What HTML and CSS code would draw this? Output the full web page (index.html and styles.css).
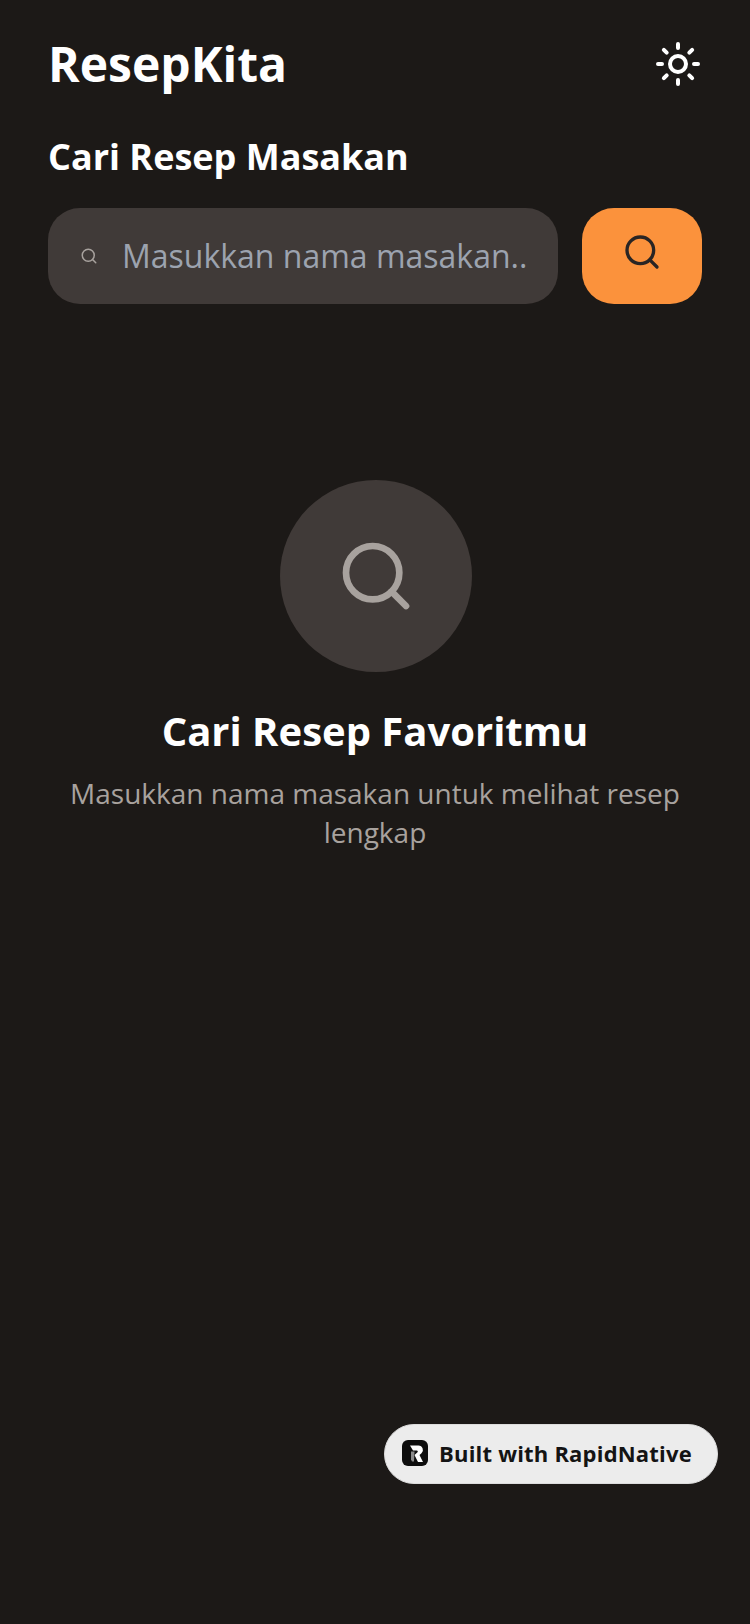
FILE: index.html
```html
<!DOCTYPE html>
<html lang="id">
<head>
<meta charset="utf-8">
<title>ResepKita</title>
<link rel="stylesheet" href="styles.css">
</head>
<body>
<main class="app">
  <header class="topbar">
    <h1 class="brand">ResepKita</h1>
    <svg class="icon-sun" viewBox="0 0 24 24" fill="none" stroke="currentColor" stroke-width="2" stroke-linecap="round" stroke-linejoin="round"><circle cx="12" cy="12" r="4"/><path d="M12 2v2M12 20v2M4.93 4.93l1.41 1.41M17.66 17.66l1.41 1.41M2 12h2M20 12h2M6.34 17.66l-1.41 1.41M19.07 4.93l-1.41 1.41"/></svg>
  </header>
  <section class="search">
    <h2 class="search-title">Cari Resep Masakan</h2>
    <div class="search-row">
      <label class="search-field">
        <svg class="icon-field" viewBox="0 0 24 24" fill="none" stroke="currentColor" stroke-width="2" stroke-linecap="round" stroke-linejoin="round"><circle cx="11" cy="11" r="8"/><path d="m21 21-4.3-4.3"/></svg>
        <input class="search-input" type="text" placeholder="Masukkan nama masakan...">
      </label>
      <button class="search-btn" type="button" aria-label="Cari">
        <svg class="icon-btn" viewBox="0 0 24 24" fill="none" stroke="currentColor" stroke-width="2" stroke-linecap="round" stroke-linejoin="round"><circle cx="11" cy="11" r="8"/><path d="m21 21-4.3-4.3"/></svg>
      </button>
    </div>
  </section>
  <section class="empty">
    <div class="empty-circle">
      <svg class="icon-empty" viewBox="0 0 24 24" fill="none" stroke="currentColor" stroke-width="2" stroke-linecap="round" stroke-linejoin="round"><circle cx="11" cy="11" r="8"/><path d="m21 21-4.3-4.3"/></svg>
    </div>
    <h3 class="empty-title">Cari Resep Favoritmu</h3>
    <p class="empty-text">Masukkan nama masakan untuk melihat resep lengkap</p>
  </section>
</main>
<div class="badge">
  <svg class="badge-logo" viewBox="0 0 26 26"><rect width="26" height="26" rx="6" fill="#0d0d0d"/><path d="M8 5.500h8.500a4.500 4.500 0 0 1 3 7.800L17.500 15l3.500 7h-5l-3.500-7 3-2.800a1 1 0 0 0-.7-1.700H11L8 5.500z" fill="#fff"/><path d="M9 11.500h3.500l-.5 10H10l-1-2z" fill="#8a8a8a"/></svg>
  <span class="badge-text">Built with RapidNative</span>
</div>
</body>
</html>
```
FILE: styles.css
```css
* { box-sizing: border-box; margin: 0; padding: 0; }
html, body { width: 750px; height: 1624px; overflow: hidden; }
body { background: #1c1917; font-family: "Open Sans", sans-serif; color: #fff; position: relative; }
.app { padding: 32px 48px 0; display: flex; flex-direction: column; }
.topbar { display: flex; justify-content: space-between; align-items: center; height: 64px; }
.brand { font-size: 48px; line-height: 64px; font-weight: 700; color: #fff; }
.icon-sun { width: 48px; height: 48px; color: #fff; display: block; }
.search { margin-top: 37px; }
.search-title { font-size: 36px; line-height: 48px; font-weight: 700; color: #fff; }
.search-row { display: flex; gap: 24px; margin-top: 27px; }
.search-field { flex: 1; height: 96px; background: #403a38; border-radius: 32px; padding: 0 32px; display: flex; align-items: center; gap: 24px; min-width: 0; }
.icon-field { width: 18px; height: 18px; color: #a8a29e; flex: none; display: block; }
.search-input { flex: 1; min-width: 0; background: none; border: 0; outline: 0; color: #fff; font: 400 32px/44px "Open Sans", sans-serif; }
.search-input::placeholder { color: #9ca3af; opacity: 1; }
.search-btn { flex: none; width: 120px; height: 96px; padding-bottom: 8px; background: #fb923c; border: 0; border-radius: 32px; display: flex; align-items: center; justify-content: center; }
.icon-btn { width: 40px; height: 40px; color: #292524; display: block; }
.empty { margin-top: 176px; padding-left: 2px; display: flex; flex-direction: column; align-items: center; text-align: center; }
.empty-circle { width: 192px; height: 192px; border-radius: 50%; background: #403a38; display: flex; align-items: center; justify-content: center; }
.icon-empty { width: 80px; height: 80px; color: #a8a29e; display: block; }
.empty-title { margin-top: 31px; margin-left: -2px; font-size: 40px; line-height: 56px; font-weight: 700; color: #fff; }
.empty-text { margin-top: 15px; margin-left: -2px; font-size: 28px; line-height: 39px; color: #a8a29e; }
.badge { position: absolute; left: 384px; top: 1424px; width: 334px; height: 60px; border-radius: 30px; background: #ececec; border: 1px solid #dcdcdc; display: flex; align-items: center; gap: 11px; padding: 0 0 2px 17px; }
.badge-logo { width: 26px; height: 26px; flex: none; display: block; }
.badge-text { font-size: 22px; letter-spacing: .2px; line-height: 32px; font-weight: 700; color: #141414; white-space: nowrap; }
```
